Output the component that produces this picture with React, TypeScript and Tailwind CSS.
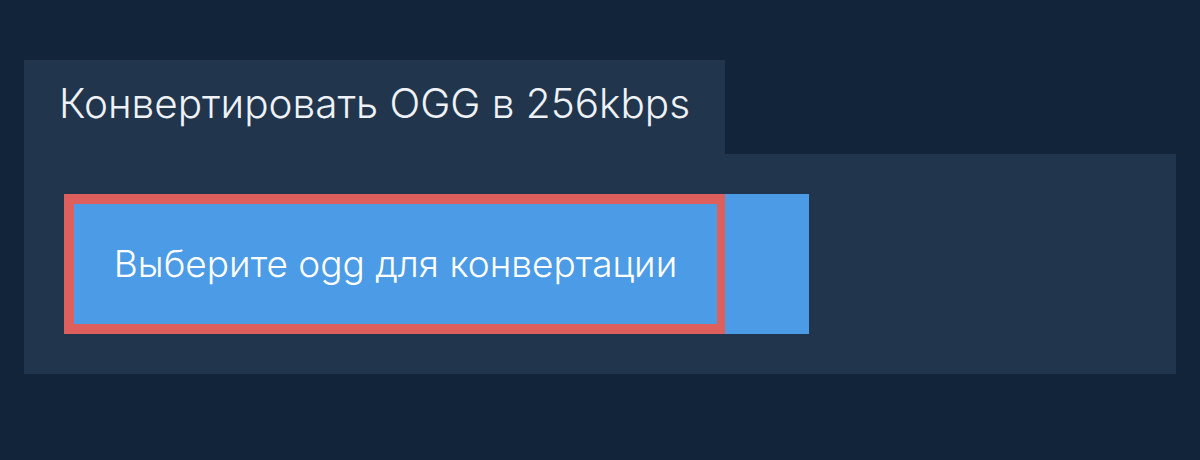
export default function App() {
  return (
    <div className="h-[460px] w-[1200px] bg-[#11243a] pt-[60px] pl-[24px] font-['Inter',sans-serif]">
      <div className="flex h-[94px] w-[701px] items-center bg-[#21354d] pl-[35px] pb-[6px]">
        <h1 className="text-[40.5px] font-light text-[#eef2f6]">Конвертировать OGG в 256kbps</h1>
      </div>
      <div className="w-[1152px] bg-[#21354d] p-[40px]">
        <div className="flex h-[140px] w-[745px]">
          <button className="flex h-full w-[661px] items-center justify-center border-[10px] border-r-[8px] border-[#de605c] bg-[#4b9be6] text-[37px] font-light text-white">
            Выберите ogg для конвертации
          </button>
          <div className="h-full flex-1 bg-[#4b9be6]" />
        </div>
      </div>
    </div>
  )
}
